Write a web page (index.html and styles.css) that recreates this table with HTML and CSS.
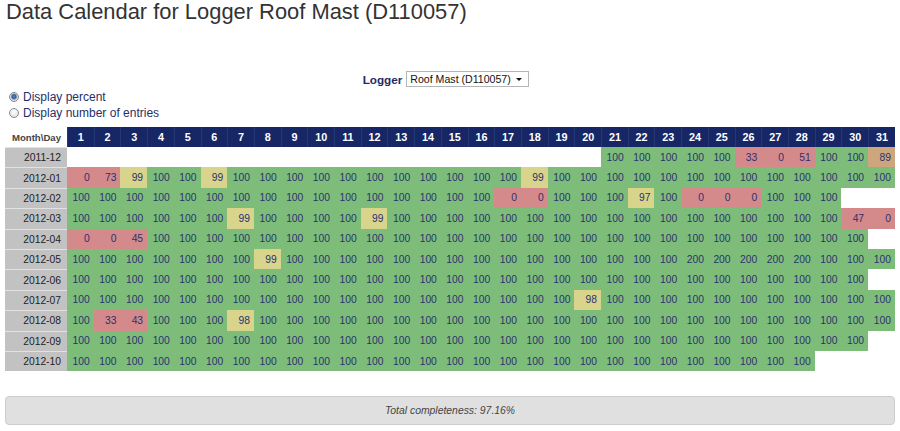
FILE: index.html
```html
<!DOCTYPE html>
<html>
<head>
<meta charset="utf-8">
<title>Data Calendar</title>
<link rel="stylesheet" href="styles.css">
</head>
<body>
<h1 class="title">Data Calendar for Logger Roof Mast (D110057)</h1>
<div class="logger-row">
  <span class="logger-label">Logger</span>
  <span class="select-wrap">
    <select class="logger-select"><option>Roof Mast (D110057)</option></select>
    <svg class="select-arrow" width="6" height="3" viewBox="0 0 6 3"><path d="M0 0H6L3 3Z" fill="#111"/></svg>
  </span>
</div>
<div class="options">
  <label class="opt"><input type="radio" name="disp" checked><span>Display percent</span></label>
  <label class="opt"><input type="radio" name="disp"><span>Display number of entries</span></label>
</div>
<table class="cal">
<colgroup><col class="c-label"><col span="31" class="c-day"></colgroup>
<thead>
<tr><th class="corner">Month\Day</th><th class="d">1</th><th class="d">2</th><th class="d">3</th><th class="d">4</th><th class="d">5</th><th class="d">6</th><th class="d">7</th><th class="d">8</th><th class="d">9</th><th class="d">10</th><th class="d">11</th><th class="d">12</th><th class="d">13</th><th class="d">14</th><th class="d">15</th><th class="d">16</th><th class="d">17</th><th class="d">18</th><th class="d">19</th><th class="d">20</th><th class="d">21</th><th class="d">22</th><th class="d">23</th><th class="d">24</th><th class="d">25</th><th class="d">26</th><th class="d">27</th><th class="d">28</th><th class="d">29</th><th class="d">30</th><th class="d">31</th></tr>
</thead>
<tbody>
<tr><th class="m">2011-12</th><td class="e"></td><td class="e"></td><td class="e"></td><td class="e"></td><td class="e"></td><td class="e"></td><td class="e"></td><td class="e"></td><td class="e"></td><td class="e"></td><td class="e"></td><td class="e"></td><td class="e"></td><td class="e"></td><td class="e"></td><td class="e"></td><td class="e"></td><td class="e"></td><td class="e"></td><td class="e"></td><td>100</td><td>100</td><td>100</td><td>100</td><td>100</td><td class="r">33</td><td class="r">0</td><td class="r">51</td><td>100</td><td>100</td><td class="o">89</td></tr>
<tr><th class="m">2012-01</th><td class="r">0</td><td class="r">73</td><td class="y">99</td><td>100</td><td>100</td><td class="y">99</td><td>100</td><td>100</td><td>100</td><td>100</td><td>100</td><td>100</td><td>100</td><td>100</td><td>100</td><td>100</td><td>100</td><td class="y">99</td><td>100</td><td>100</td><td>100</td><td>100</td><td>100</td><td>100</td><td>100</td><td>100</td><td>100</td><td>100</td><td>100</td><td>100</td><td>100</td></tr>
<tr><th class="m">2012-02</th><td>100</td><td>100</td><td>100</td><td>100</td><td>100</td><td>100</td><td>100</td><td>100</td><td>100</td><td>100</td><td>100</td><td>100</td><td>100</td><td>100</td><td>100</td><td>100</td><td class="r">0</td><td class="r">0</td><td>100</td><td>100</td><td>100</td><td class="y">97</td><td>100</td><td class="r">0</td><td class="r">0</td><td class="r">0</td><td>100</td><td>100</td><td>100</td><td class="e"></td><td class="e"></td></tr>
<tr><th class="m">2012-03</th><td>100</td><td>100</td><td>100</td><td>100</td><td>100</td><td>100</td><td class="y">99</td><td>100</td><td>100</td><td>100</td><td>100</td><td class="y">99</td><td>100</td><td>100</td><td>100</td><td>100</td><td>100</td><td>100</td><td>100</td><td>100</td><td>100</td><td>100</td><td>100</td><td>100</td><td>100</td><td>100</td><td>100</td><td>100</td><td>100</td><td class="r">47</td><td class="r">0</td></tr>
<tr><th class="m">2012-04</th><td class="r">0</td><td class="r">0</td><td class="r">45</td><td>100</td><td>100</td><td>100</td><td>100</td><td>100</td><td>100</td><td>100</td><td>100</td><td>100</td><td>100</td><td>100</td><td>100</td><td>100</td><td>100</td><td>100</td><td>100</td><td>100</td><td>100</td><td>100</td><td>100</td><td>100</td><td>100</td><td>100</td><td>100</td><td>100</td><td>100</td><td>100</td><td class="e"></td></tr>
<tr><th class="m">2012-05</th><td>100</td><td>100</td><td>100</td><td>100</td><td>100</td><td>100</td><td>100</td><td class="y">99</td><td>100</td><td>100</td><td>100</td><td>100</td><td>100</td><td>100</td><td>100</td><td>100</td><td>100</td><td>100</td><td>100</td><td>100</td><td>100</td><td>100</td><td>100</td><td>200</td><td>200</td><td>200</td><td>200</td><td>200</td><td>100</td><td>100</td><td>100</td></tr>
<tr><th class="m">2012-06</th><td>100</td><td>100</td><td>100</td><td>100</td><td>100</td><td>100</td><td>100</td><td>100</td><td>100</td><td>100</td><td>100</td><td>100</td><td>100</td><td>100</td><td>100</td><td>100</td><td>100</td><td>100</td><td>100</td><td>100</td><td>100</td><td>100</td><td>100</td><td>100</td><td>100</td><td>100</td><td>100</td><td>100</td><td>100</td><td>100</td><td class="e"></td></tr>
<tr><th class="m">2012-07</th><td>100</td><td>100</td><td>100</td><td>100</td><td>100</td><td>100</td><td>100</td><td>100</td><td>100</td><td>100</td><td>100</td><td>100</td><td>100</td><td>100</td><td>100</td><td>100</td><td>100</td><td>100</td><td>100</td><td class="y">98</td><td>100</td><td>100</td><td>100</td><td>100</td><td>100</td><td>100</td><td>100</td><td>100</td><td>100</td><td>100</td><td>100</td></tr>
<tr><th class="m">2012-08</th><td>100</td><td class="r">33</td><td class="r">43</td><td>100</td><td>100</td><td>100</td><td class="y">98</td><td>100</td><td>100</td><td>100</td><td>100</td><td>100</td><td>100</td><td>100</td><td>100</td><td>100</td><td>100</td><td>100</td><td>100</td><td>100</td><td>100</td><td>100</td><td>100</td><td>100</td><td>100</td><td>100</td><td>100</td><td>100</td><td>100</td><td>100</td><td>100</td></tr>
<tr><th class="m">2012-09</th><td>100</td><td>100</td><td>100</td><td>100</td><td>100</td><td>100</td><td>100</td><td>100</td><td>100</td><td>100</td><td>100</td><td>100</td><td>100</td><td>100</td><td>100</td><td>100</td><td>100</td><td>100</td><td>100</td><td>100</td><td>100</td><td>100</td><td>100</td><td>100</td><td>100</td><td>100</td><td>100</td><td>100</td><td>100</td><td>100</td><td class="e"></td></tr>
<tr><th class="m">2012-10</th><td>100</td><td>100</td><td>100</td><td>100</td><td>100</td><td>100</td><td>100</td><td>100</td><td>100</td><td>100</td><td>100</td><td>100</td><td>100</td><td>100</td><td>100</td><td>100</td><td>100</td><td>100</td><td>100</td><td>100</td><td>100</td><td>100</td><td>100</td><td>100</td><td>100</td><td>100</td><td>100</td><td>100</td><td class="e"></td><td class="e"></td><td class="e"></td></tr>
</tbody>
</table>
<div class="total">Total completeness: 97.16%</div>
</body>
</html>
```
FILE: styles.css
```css
html, body {
  margin: 0;
  padding: 0;
  background: #fff;
}
body {
  padding: 0 5px;
  font-family: "Liberation Sans", Arial, sans-serif;
  color: #333;
}
.title {
  margin: 0;
  padding-left: 1px;
  font-size: 21.9px;
  line-height: 24px;
  font-weight: normal;
  color: #333;
}
.logger-row {
  display: flex;
  justify-content: center;
  align-items: center;
  gap: 4px;
  margin-top: 47px;
  padding-right: 8px;
  height: 16px;
}
.logger-label {
  font-size: 11.7px;
  font-weight: bold;
  color: #1e2a66;
}
.select-wrap {
  position: relative;
  display: inline-block;
}
.logger-select {
  appearance: none;
  -webkit-appearance: none;
  display: block;
  width: 123px;
  height: 16px;
  margin: 0;
  padding: 0 14px 0 3px;
  border: 1px solid #b5b5b5;
  border-radius: 0;
  background: #fff;
  font-family: "Liberation Sans", Arial, sans-serif;
  font-size: 10.6px;
  line-height: 14px;
  color: #111;
}
.select-arrow {
  position: absolute;
  right: 7px;
  top: 7px;
  pointer-events: none;
}
.options {
  margin-top: 2px;
  padding-left: 4px;
}
.opt {
  display: flex;
  align-items: center;
  height: 16px;
  font-size: 12px;
  color: #25306a;
}
.opt input {
  appearance: none;
  -webkit-appearance: none;
  width: 10px;
  height: 10px;
  margin: 0 4px 0 0;
  border: 1px solid #8a8a8a;
  border-radius: 50%;
  background: radial-gradient(circle at 50% 35%, #ffffff 0%, #e6e6e6 70%, #d0d0d0 100%);
  box-sizing: border-box;
}
.opt input:checked {
  background: radial-gradient(circle at 50% 45%, #5a8ccc 0%, #2f5f9e 30%, #7f99b8 45%, #dcdcdc 60%, #eeeeee 100%);
}
.cal {
  margin-top: 6px;
  width: 890px;
  table-layout: fixed;
  border-collapse: separate;
  border-spacing: 0;
  font-size: 10.3px;
}
.c-label { width: 62px; }
.c-day { width: 26.71px; }
.cal thead tr { height: 20px; }
.cal tbody tr { height: 20.4px; }
.corner {
  text-align: right;
  padding: 0 6px 0 0;
  font-size: 9.6px;
  font-weight: bold;
  color: #444;
  background: #fff;
}
.d {
  padding: 0;
  background: #172765;
  color: #fff;
  font-size: 10.8px;
  font-weight: bold;
  text-align: center;
  border-left: 1px solid #263775;
}
.m {
  padding: 0 6px 0 0;
  background: #c2c2c2;
  border-top: 1px solid #e2e2e2;
  color: #222;
  font-weight: normal;
  text-align: right;
  font-size: 10.3px;
}
.cal td {
  padding: 0 4px 0 0;
  text-align: right;
  color: #2a3170;
  background: #7dbd79;
  white-space: nowrap;
  overflow: hidden;
}
.cal td.r { background: #d4898b; }
.cal td.y { background: #d8d48b; }
.cal td.o { background: #cea67d; }
.cal td.e { background: #fff; }
.total {
  margin-top: 25px;
  height: 27px;
  line-height: 27px;
  background: #e0e0e0;
  border: 1px solid #cdcdcd;
  border-radius: 4px;
  text-align: center;
  font-style: italic;
  font-size: 10.4px;
  color: #444;
}
```
